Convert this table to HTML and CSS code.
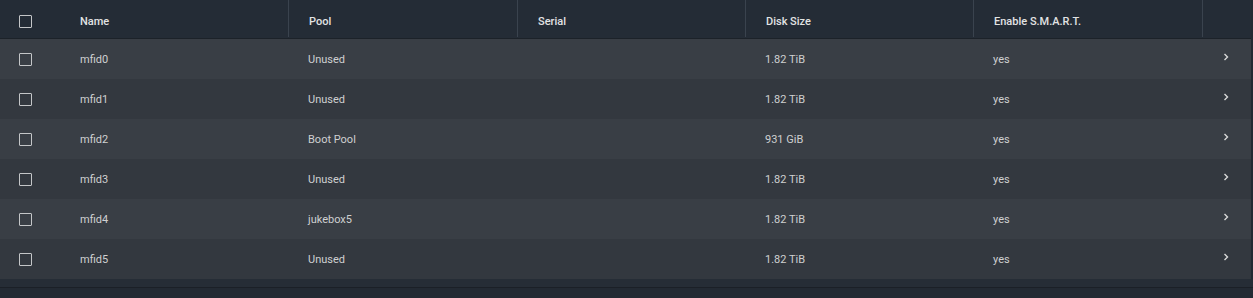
FILE: index.html
```html
<!DOCTYPE html>
<html>
<head>
<meta charset="utf-8">
<link rel="stylesheet" href="styles.css">
</head>
<body>
<div class="page">
  <div class="table">
    <div class="row head">
      <div class="cell check"><span class="box"></span></div>
      <div class="cell col">Name</div>
      <div class="cell col">Pool</div>
      <div class="cell col">Serial</div>
      <div class="cell col">Disk Size</div>
      <div class="cell col">Enable S.M.A.R.T.</div>
      <div class="cell act"></div>
    </div>
    <div class="row odd">
      <div class="cell check"><span class="box"></span></div>
      <div class="cell col">mfid0</div><div class="cell col">Unused</div><div class="cell col"></div>
      <div class="cell col">1.82 TiB</div><div class="cell col">yes</div>
      <div class="cell act"><svg width="6" height="8" viewBox="0 0 6 8"><path d="M1.5 1 L4.5 4 L1.5 7" fill="none" stroke="#d8d8d8" stroke-width="1.4"/></svg></div>
    </div>
    <div class="row even">
      <div class="cell check"><span class="box"></span></div>
      <div class="cell col">mfid1</div><div class="cell col">Unused</div><div class="cell col"></div>
      <div class="cell col">1.82 TiB</div><div class="cell col">yes</div>
      <div class="cell act"><svg width="6" height="8" viewBox="0 0 6 8"><path d="M1.5 1 L4.5 4 L1.5 7" fill="none" stroke="#d8d8d8" stroke-width="1.4"/></svg></div>
    </div>
    <div class="row odd">
      <div class="cell check"><span class="box"></span></div>
      <div class="cell col">mfid2</div><div class="cell col">Boot Pool</div><div class="cell col"></div>
      <div class="cell col">931 GiB</div><div class="cell col">yes</div>
      <div class="cell act"><svg width="6" height="8" viewBox="0 0 6 8"><path d="M1.5 1 L4.5 4 L1.5 7" fill="none" stroke="#d8d8d8" stroke-width="1.4"/></svg></div>
    </div>
    <div class="row even">
      <div class="cell check"><span class="box"></span></div>
      <div class="cell col">mfid3</div><div class="cell col">Unused</div><div class="cell col"></div>
      <div class="cell col">1.82 TiB</div><div class="cell col">yes</div>
      <div class="cell act"><svg width="6" height="8" viewBox="0 0 6 8"><path d="M1.5 1 L4.5 4 L1.5 7" fill="none" stroke="#d8d8d8" stroke-width="1.4"/></svg></div>
    </div>
    <div class="row odd">
      <div class="cell check"><span class="box"></span></div>
      <div class="cell col">mfid4</div><div class="cell col">jukebox5</div><div class="cell col"></div>
      <div class="cell col">1.82 TiB</div><div class="cell col">yes</div>
      <div class="cell act"><svg width="6" height="8" viewBox="0 0 6 8"><path d="M1.5 1 L4.5 4 L1.5 7" fill="none" stroke="#d8d8d8" stroke-width="1.4"/></svg></div>
    </div>
    <div class="row even">
      <div class="cell check"><span class="box"></span></div>
      <div class="cell col">mfid5</div><div class="cell col">Unused</div><div class="cell col"></div>
      <div class="cell col">1.82 TiB</div><div class="cell col">yes</div>
      <div class="cell act"><svg width="6" height="8" viewBox="0 0 6 8"><path d="M1.5 1 L4.5 4 L1.5 7" fill="none" stroke="#d8d8d8" stroke-width="1.4"/></svg></div>
    </div>
  </div>
  <div class="footer"></div>
</div>
</body>
</html>
```
FILE: styles.css
```css
* { box-sizing: border-box; }
html, body { margin: 0; padding: 0; background: #232a33; }
body { font-family: Roboto, "Liberation Sans", sans-serif; font-size: 11px; }
.page { width: 1253px; height: 298px; display: flex; flex-direction: column; background: #232a33; }
.table { width: 1251px; display: flex; flex-direction: column; }
.row {
  display: grid;
  grid-template-columns: 60px 228px 229px 228px 228px 229px 49px;
  height: 40px;
  align-items: center;
  color: #cfd0d1;
}
.row.head { height: 39px; background: #242c36; color: #e2e3e4; font-weight: 500; border-bottom: 1px solid #1c2229; }
.row.odd { background: #393e45; }
.row.even { background: #33383f; }
.cell { height: 100%; display: flex; align-items: center; }
.col { padding-left: 20px; }
.head .cell { height: 37px; align-self: start; padding-top: 6px; }
.head .col, .head .act { border-left: 1px solid #3a434e; }
.head .cell:nth-child(2) { border-left: none; }
.check { justify-content: center; padding-right: 10px; }
.box { width: 13px; height: 13px; border: 1.5px solid #c4c6c8; border-radius: 1px; display: block; }
.act { padding-left: 21px; align-items: flex-start; padding-top: 14px; }
.footer { flex: 1; border-top: 8px solid #262d36; }
.footer::after { content: ""; display: block; height: 1px; background: #1b2027; }
```
